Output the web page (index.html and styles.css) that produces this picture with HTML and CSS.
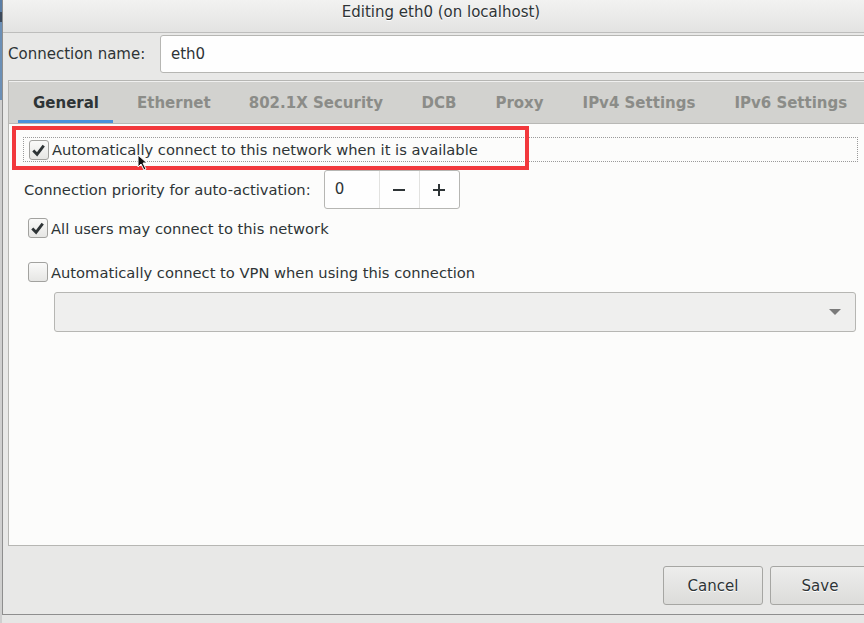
FILE: index.html
```html
<!DOCTYPE html>
<html>
<head>
<meta charset="utf-8">
<link rel="stylesheet" href="styles.css">
</head>
<body>
<div class="screen">
  <div class="backstrip"></div>
  <div class="dialog">
    <div class="titlebar">Editing eth0 (on localhost)</div>
    <div class="body">
      <div class="name-row">
        <span class="name-label">Connection name:</span>
        <div class="entry">eth0</div>
      </div>
      <div class="notebook">
        <div class="tabs">
          <div class="tab active">General</div>
          <div class="tab">Ethernet</div>
          <div class="tab">802.1X Security</div>
          <div class="tab">DCB</div>
          <div class="tab">Proxy</div>
          <div class="tab">IPv4 Settings</div>
          <div class="tab">IPv6 Settings</div>
        </div>
        <div class="page">
          <div class="focus-row">
            <span class="check checked"><svg viewBox="0 0 20 20" width="20" height="20"><path d="M4.5 10.5 L8.5 14.5 L15.5 5.5" fill="none" stroke="#2e3436" stroke-width="3"/></svg></span>
            <span class="label">Automatically connect to this network when it is available</span>
          </div>
          <div class="prio-row">
            <span class="label">Connection priority for auto-activation:</span>
            <div class="spin">
              <div class="spin-val">0</div>
              <div class="spin-btn"><svg viewBox="0 0 12 12" width="12" height="12"><path d="M0 6 H12" stroke="#2e3436" stroke-width="2"/></svg></div>
              <div class="spin-btn"><svg viewBox="0 0 12 12" width="12" height="12"><path d="M0 6 H12 M6 0 V12" stroke="#2e3436" stroke-width="2"/></svg></div>
            </div>
          </div>
          <div class="check-row">
            <span class="check checked"><svg viewBox="0 0 20 20" width="20" height="20"><path d="M4.5 10.5 L8.5 14.5 L15.5 5.5" fill="none" stroke="#2e3436" stroke-width="3"/></svg></span>
            <span class="label">All users may connect to this network</span>
          </div>
          <div class="check-row vpn">
            <span class="check"></span>
            <span class="label">Automatically connect to VPN when using this connection</span>
          </div>
          <div class="combo"><svg viewBox="0 0 12 8" width="12" height="8"><path d="M0 1 H12 L6 7 Z" fill="#7a7a7a"/></svg></div>
          <div class="highlight"></div>
          <svg class="cursor" viewBox="0 0 12 18" width="12" height="18"><path d="M1 1 L1 13 L4 10 L7 16 L9 15 L6 9 L10 9 Z" fill="#111" stroke="#fff" stroke-width="1"/></svg>
        </div>
      </div>
      <div class="actions">
        <button class="btn">Cancel</button>
        <button class="btn">Save</button>
      </div>
    </div>
  </div>
</div>
</body>
</html>
```
FILE: styles.css
```css
html, body {
  margin: 0;
  padding: 0;
  width: 864px;
  height: 623px;
  overflow: hidden;
  background: #e6e6e5;
  font-family: "DejaVu Sans", "Liberation Sans", sans-serif;
  color: #2e3436;
}
.screen {
  display: flex;
  width: 900px;
  height: 623px;
}
.backstrip {
  width: 2px;
  flex: none;
  background: linear-gradient(#5b7ea6 0, #5b7ea6 12px, #3c4a5c 12px, #3c4a5c 22px, #6b8fb6 22px, #6b8fb6 100px, #cfcfcf 100px);
}
.dialog {
  width: 890px;
  height: 614px;
  border-left: 1px solid #8e8e8e;
  border-bottom: 1px solid #8e8e8e;
  background: #e8e8e7;
  display: flex;
  flex-direction: column;
}
.titlebar {
  height: 33px;
  box-sizing: border-box;
  background: linear-gradient(#f2f2f1, #e3e3e2);
  border-bottom: 1px solid #bdbdbc;
  font-size: 15px;
  line-height: 25px;
  padding-right: 14px;
  text-align: center;
  color: #2e3436;
  text-shadow: 0 1px #fff;
}
.body {
  flex: 1;
  display: flex;
  flex-direction: column;
  padding-left: 5px;
}
.name-row {
  display: flex;
  align-items: center;
  height: 40px;
  margin-top: 1px;
}
.name-label {
  font-size: 15px;
  width: 152px;
}
.entry {
  flex: 1;
  height: 38px;
  box-sizing: border-box;
  background: #fefefe;
  border: 1px solid #b6b6b3;
  border-radius: 3px;
  font-size: 15px;
  line-height: 36px;
  padding-left: 10px;
}
.notebook {
  margin-top: 6px;
  height: 464px;
  border: 1px solid #b6b6b3;
  border-right: none;
  display: flex;
  flex-direction: column;
  background: #fcfcfb;
}
.tabs {
  height: 43px;
  box-sizing: border-box;
  background: #d2d2cf;
  border-top: 1px solid #f0f0ef;
  border-bottom: 1px solid #b8b8b5;
  display: flex;
  padding-left: 9px;
}
.tab {
  font-size: 15px;
  font-weight: bold;
  color: #8b8c88;
  padding: 1px 19px 0;
  line-height: 40px;
  border-bottom: 3px solid transparent;
}
.tab.active {
  color: #2e3436;
  padding: 1px 14px 0 15px;
  margin-right: 5px;
  border-bottom-color: #4a90d9;
}
.tab:nth-child(n+4) {
  padding-left: 19.5px;
  padding-right: 19.5px;
}
.page {
  flex: 1;
  position: relative;
  padding-left: 14px;
}
.focus-row {
  margin-top: 13px;
  height: 25px;
  box-sizing: border-box;
  border: 1px dotted #9a9a9a;
  display: flex;
  align-items: center;
  padding-left: 5px;
  width: 835px;
}
.label {
  font-size: 14.7px;
  color: #2e3436;
}
.check {
  width: 20px;
  height: 20px;
  box-sizing: border-box;
  border: 1px solid #a2a29f;
  border-radius: 3px;
  background: linear-gradient(#fafaf9, #e6e6e4);
  display: inline-flex;
  margin-right: 3px;
  flex: none;
}
.check svg {
  margin: -1px 0 0 -1px;
}
.prio-row {
  display: flex;
  align-items: center;
  margin-top: 8px;
  margin-left: 1px;
}
.spin {
  margin-left: 13px;
  display: flex;
  height: 39px;
  box-sizing: border-box;
  border: 1px solid #b6b6b3;
  border-radius: 3px;
  background: #fefefe;
}
.spin-val {
  width: 55px;
  font-size: 15px;
  line-height: 37px;
  padding-left: 10px;
  box-sizing: border-box;
  border-right: 1px solid #e2e2e0;
}
.spin-btn {
  width: 39px;
  display: flex;
  align-items: center;
  justify-content: center;
  border-right: 1px solid #e2e2e0;
}
.spin-btn:last-child {
  border-right: none;
}
.check-row {
  display: flex;
  align-items: center;
  margin-top: 9px;
  padding-left: 5px;
}
.check-row.vpn {
  margin-top: 24px;
}
.combo {
  margin: 10px 0 0 31px;
  width: 802px;
  height: 40px;
  box-sizing: border-box;
  border: 1px solid #b6b6b3;
  border-radius: 3px;
  background: #efefee;
  display: flex;
  align-items: center;
  justify-content: flex-end;
  padding-right: 14px;
}
.highlight {
  position: absolute;
  left: 3px;
  top: 2px;
  width: 517px;
  height: 44px;
  box-sizing: border-box;
  border: 4px solid #f2383c;
}
.cursor {
  position: absolute;
  left: 128px;
  top: 30px;
}
.actions {
  flex: 1;
  display: flex;
  align-items: flex-start;
  padding-top: 20px;
  padding-left: 655px;
  gap: 7px;
}
.btn {
  width: 100px;
  height: 39px;
  font-family: "DejaVu Sans", "Liberation Sans", sans-serif;
  font-size: 15px;
  color: #2e3436;
  background: linear-gradient(#ededec, #dcdcda);
  border: 1px solid #a6a6a3;
  border-radius: 3px;
  text-shadow: 0 1px #fff;
}
```
